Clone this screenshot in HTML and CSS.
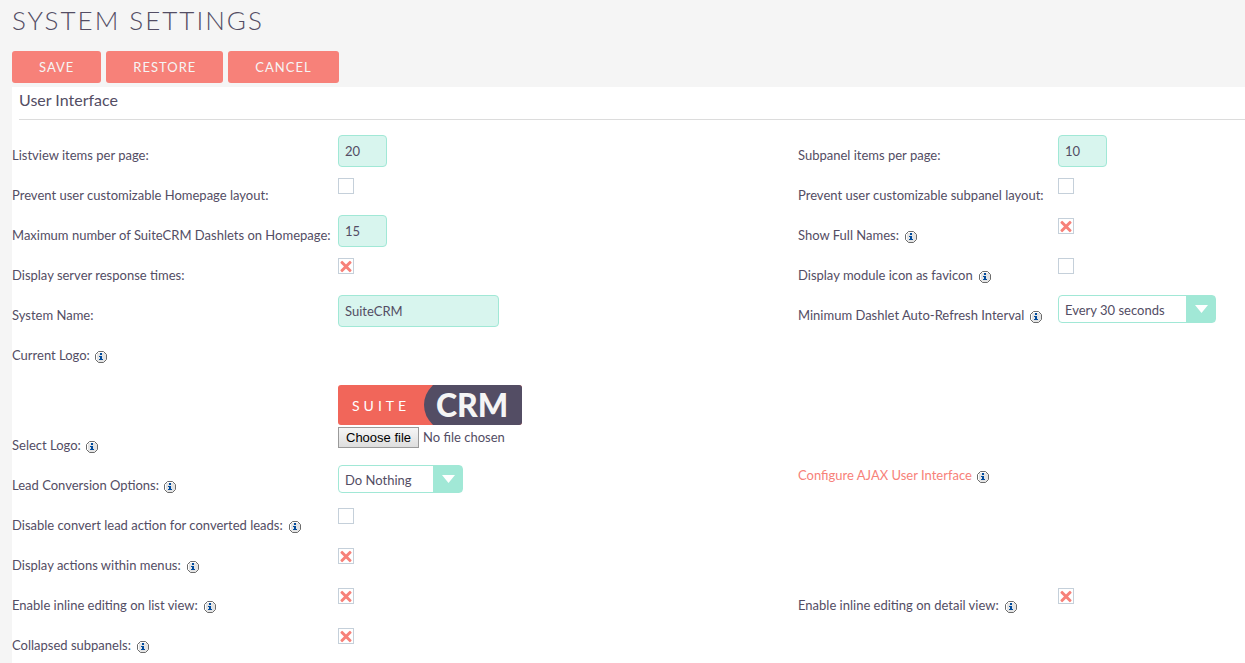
FILE: index.html
```html
<!DOCTYPE html>
<html lang="en">
<head>
<meta charset="utf-8">
<title>System Settings</title>
<link rel="stylesheet" href="styles.css">
</head>
<body>
<svg class="sprite" aria-hidden="true">
  <symbol id="info" viewBox="0 0 12 12">
    <path d="M3.5 .5h5l3 3v5l-3 3h-5l-3-3v-5z" fill="#e4e4e4" stroke="#6c6c6c"/>
    <path d="M3 1h6v1H3zM1 3h1v6H1z" fill="#fff"/>
    <path d="M5 2h2v2H5zM4 5h3v3h1v1H4V8h1V6H4z" fill="#004a9c"/>
  </symbol>
</svg>
<main class="page">
  <h1 class="title">SYSTEM SETTINGS</h1>
  <form>
    <div class="actions">
      <button class="btn" type="button">SAVE</button>
      <button class="btn" type="button">RESTORE</button>
      <button class="btn" type="button">CANCEL</button>
    </div>
    <section class="panel">
      <h2 class="panel-title">User Interface</h2>
      <div class="row">
        <div class="label"><label for="listview">Listview items per page:</label></div>
        <div class="field"><input class="text short" id="listview" type="text" value="20"></div>
        <div class="label"><label for="subpanel">Subpanel items per page:</label></div>
        <div class="field"><input class="text short" id="subpanel" type="text" value="10"></div>
      </div>
      <div class="row">
        <div class="label"><label for="lock-home">Prevent user customizable Homepage layout:</label></div>
        <div class="field"><input class="check" id="lock-home" type="checkbox"></div>
        <div class="label"><label for="lock-sub">Prevent user customizable subpanel layout:</label></div>
        <div class="field"><input class="check" id="lock-sub" type="checkbox"></div>
      </div>
      <div class="row">
        <div class="label"><label for="max-dash">Maximum number of SuiteCRM Dashlets on Homepage:</label></div>
        <div class="field"><input class="text short" id="max-dash" type="text" value="15"></div>
        <div class="label wide"><label for="full-names">Show Full Names:</label><svg class="info"><use href="#info"/></svg></div>
        <div class="field"><input class="check" id="full-names" type="checkbox" checked></div>
      </div>
      <div class="row">
        <div class="label"><label for="resp-times">Display server response times:</label></div>
        <div class="field"><input class="check" id="resp-times" type="checkbox" checked></div>
        <div class="label wide"><label for="favicon">Display module icon as favicon</label><svg class="info"><use href="#info"/></svg></div>
        <div class="field"><input class="check" id="favicon" type="checkbox"></div>
      </div>
      <div class="row">
        <div class="label"><label for="sys-name">System Name:</label></div>
        <div class="field"><input class="text" id="sys-name" type="text" value="SuiteCRM"></div>
        <div class="label wide"><label for="refresh">Minimum Dashlet Auto-Refresh Interval</label><svg class="info"><use href="#info"/></svg></div>
        <div class="field"><div class="select interval"><select id="refresh"><option>Every 30 seconds</option></select></div></div>
      </div>
      <div class="row">
        <div class="label"><span>Current Logo:</span><svg class="info"><use href="#info"/></svg></div>
        <div class="field logo-field">
          <svg class="logo" viewBox="0 0 184 40" role="img" aria-label="SuiteCRM">
            <rect width="184" height="40" rx="3" fill="#f1665a"/>
            <path d="M95 0h86a3 3 0 0 1 3 3v34a3 3 0 0 1-3 3H95Q86 31 86 20T95 0z" fill="#534d64"/>
            <text class="logo-suite" x="14" y="26">SUITE</text>
            <text class="logo-crm" x="98" y="32">CRM</text>
          </svg>
        </div>
      </div>
      <div class="row">
        <div class="label"><label for="logo-file">Select Logo:</label><svg class="info"><use href="#info"/></svg></div>
        <div class="field">
          <div class="file">
            <input class="file-input" id="logo-file" type="file">
            <label class="file-btn" for="logo-file">Choose file</label>
            <span>No file chosen</span>
          </div>
        </div>
      </div>
      <div class="row">
        <div class="label"><label for="lead">Lead Conversion Options:</label><svg class="info"><use href="#info"/></svg></div>
        <div class="field"><div class="select lead"><select id="lead"><option>Do Nothing</option></select></div></div>
        <div class="label top"><a class="link" href="#">Configure AJAX User Interface</a><svg class="info"><use href="#info"/></svg></div>
      </div>
      <div class="row">
        <div class="label wide"><label for="no-convert">Disable convert lead action for converted leads:</label><svg class="info"><use href="#info"/></svg></div>
        <div class="field"><input class="check" id="no-convert" type="checkbox"></div>
      </div>
      <div class="row">
        <div class="label wide"><label for="menus">Display actions within menus:</label><svg class="info"><use href="#info"/></svg></div>
        <div class="field"><input class="check" id="menus" type="checkbox" checked></div>
      </div>
      <div class="row">
        <div class="label wide"><label for="inline-list">Enable inline editing on list view:</label><svg class="info"><use href="#info"/></svg></div>
        <div class="field"><input class="check" id="inline-list" type="checkbox" checked></div>
        <div class="label wide"><label for="inline-detail">Enable inline editing on detail view:</label><svg class="info"><use href="#info"/></svg></div>
        <div class="field"><input class="check" id="inline-detail" type="checkbox" checked></div>
      </div>
      <div class="row">
        <div class="label wide"><label for="collapsed">Collapsed subpanels:</label><svg class="info"><use href="#info"/></svg></div>
        <div class="field"><input class="check" id="collapsed" type="checkbox" checked></div>
      </div>
    </section>
  </form>
</main>
</body>
</html>
```
FILE: styles.css
```css
* { box-sizing: border-box; }
html { scrollbar-width: none; }
body {
  margin: 0;
  background: #f5f5f5;
  color: #534d64;
  font: 13px/20px Lato, sans-serif;
}
.sprite { display: none; }
.page { padding-left: 12px; }
.title {
  margin: 0;
  padding: 4px 0 15px;
  font-size: 26px;
  line-height: 32px;
  font-weight: 300;
  letter-spacing: 2px;
}
.actions { display: flex; gap: 5px; padding-bottom: 4px; }
.btn {
  height: 32px;
  padding: 0 27px;
  border: 0;
  border-radius: 3px;
  background: #f78179;
  color: #f5f5f5;
  font: 13px/32px Lato, sans-serif;
  letter-spacing: 1px;
}
.panel { background: #fff; }
.panel-title {
  margin: 0 0 15px 7px;
  padding: 1px 0 7px;
  border-bottom: 1px solid #dcdcdc;
  font-size: 16px;
  line-height: 24px;
  font-weight: 400;
}
.row {
  display: grid;
  grid-template-columns: 326px minmax(0, 460fr) 260px minmax(0, 187fr);
  min-height: 40px;
}
.label { display: flex; align-items: center; gap: 5px; height: 40px; }
.label.wide { gap: 6px; }
.label.top { height: 20px; }
.info { flex: none; width: 12px; height: 12px; margin-top: 4px; }
.link { color: #f78179; text-decoration: none; }
.text {
  display: block;
  width: 161px;
  height: 32px;
  padding: 0 6px;
  border: 1px solid #a1e8d6;
  border-radius: 4px;
  background: #d8f5ee;
  color: #534d64;
  font: 13px/20px Lato, sans-serif;
}
.text.short { width: 49px; }
.check {
  appearance: none;
  display: grid;
  place-items: center;
  width: 16px;
  height: 16px;
  margin: 3px 0 0;
  border: 1px solid #c5d0da;
  background: #fff;
}
.check:checked::before,
.check:checked::after {
  content: "";
  grid-area: 1 / 1;
  width: 14px;
  height: 3px;
  border-radius: 1px;
  background: #f78179;
  transform: rotate(45deg);
}
.check:checked::after { transform: rotate(-45deg); }
.select { position: relative; height: 28px; }
.select.interval { width: 158px; }
.select.lead { width: 125px; }
.select select {
  appearance: none;
  width: 100%;
  height: 28px;
  padding: 2px 30px 0 6px;
  border: 1px solid #a1e8d6;
  border-radius: 4px;
  background: linear-gradient(#a1e8d6, #a1e8d6) right / 29px 100% no-repeat #fff;
  color: #534d64;
  font: 13px/20px Lato, sans-serif;
}
.select::after {
  content: "";
  position: absolute;
  top: 10px;
  right: 8px;
  width: 13px;
  height: 8px;
  background: #fff;
  clip-path: polygon(0 0, 100% 0, 50% 100%);
  pointer-events: none;
}
.logo-field { padding-top: 50px; }
.logo { display: block; width: 184px; height: 40px; }
.logo-suite { fill: #fff; font: 400 14px Lato, sans-serif; letter-spacing: 4px; }
.logo-crm { fill: #f5f5f5; font: 900 32px Lato, sans-serif; }
.file { position: relative; display: flex; gap: 4px; padding-top: 2px; }
.file-input { position: absolute; width: 81px; height: 21px; opacity: 0; }
.file-btn {
  padding: 0 7px;
  border: 1px solid #9a9a9a;
  background: linear-gradient(#f6f6f6, #dedede);
  color: #000;
  font: 13px/19px "Liberation Sans", Arial, sans-serif;
}
```
